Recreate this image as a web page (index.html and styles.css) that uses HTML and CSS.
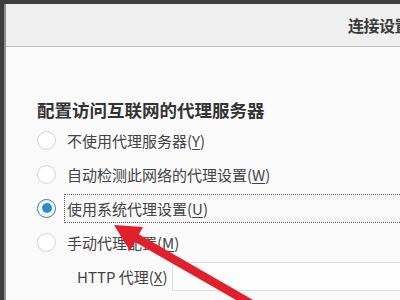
FILE: index.html
```html
<!DOCTYPE html>
<html lang="zh-CN">
<head>
<meta charset="utf-8">
<title>连接设置</title>
<link rel="stylesheet" href="styles.css">
</head>
<body>
<div class="screen">
  <div class="window">
    <header class="titlebar"><span class="title">连接设置</span></header>
    <main class="content">
      <h2 class="heading">配置访问互联网的代理服务器</h2>
      <div class="options">
        <div class="row"><span class="radio"></span><span class="label">不使用代理服务器(<u>Y</u>)</span></div>
        <div class="row"><span class="radio"></span><span class="label">自动检测此网络的代理设置(<u>W</u>)</span></div>
        <div class="row"><span class="radio checked"></span><span class="label focus">使用系统代理设置(<u>U</u>)</span></div>
        <div class="row"><span class="radio"></span><span class="label">手动代理配置(<u>M</u>)</span></div>
        <div class="row field"><span class="field-label">HTTP 代理(<u>X</u>)</span><span class="input"></span></div>
      </div>
    </main>
  </div>
  <svg class="arrow" width="400" height="300" viewBox="0 0 400 300" aria-hidden="true">
    <line x1="128" y1="233" x2="262" y2="310" stroke="#e2202b" stroke-width="8.5"/>
    <polygon points="114,225 143,227 130,251" fill="#e2202b"/>
  </svg>
</div>
</body>
</html>
```
FILE: styles.css
```css
html, body {
  margin: 0;
  padding: 0;
}
body {
  width: 400px;
  height: 300px;
  overflow: hidden;
  font-family: "Noto Sans CJK SC", "Noto Sans", sans-serif;
}
.screen {
  position: relative;
  width: 400px;
  height: 300px;
  background: #3e3e3e;
  padding: 4px 0 0 4px;
  box-sizing: border-box;
  overflow: hidden;
}
.window {
  height: 296px;
  background: #fbfafb;
  border-left: 2px solid #8e8e8e;
  display: flex;
  flex-direction: column;
}
.titlebar {
  height: 42px;
  flex: none;
  background: #f0eff0;
  border-bottom: 1px solid #bdbdbd;
  display: flex;
  align-items: center;
  padding-left: 342px;
  white-space: nowrap;
  overflow: hidden;
}
.title {
  font-size: 16px;
  font-weight: 700;
  color: #3a3a3a;
  letter-spacing: -0.5px;
  flex: none;
}
.content {
  padding-left: 31px;
  padding-top: 51px;
}
.heading {
  margin: 0;
  font-size: 17.5px;
  line-height: 24px;
  font-weight: 700;
  color: #333;
  white-space: nowrap;
}
.options {
  display: flex;
  flex-direction: column;
}
.row {
  height: 34px;
  display: flex;
  align-items: center;
  white-space: nowrap;
}
.row:first-child {
  margin-top: 1px;
}
.radio {
  width: 19px;
  height: 19px;
  border: 1px solid #d3d3d3;
  border-radius: 50%;
  background: #ffffff;
  flex: none;
  box-sizing: border-box;
  display: flex;
  align-items: center;
  justify-content: center;
}
.radio.checked {
  border: 1.5px solid #1f7fd0;
}
.radio.checked::after {
  content: "";
  width: 10px;
  height: 10px;
  border-radius: 50%;
  background: #2a8ad6;
}
.label {
  margin-left: 8px;
  font-size: 15px;
  line-height: 27px;
  color: #444;
  padding: 0 2px;
  border: 1px solid transparent;
  flex: none;
}
.label.focus {
  border: 1px dotted #555;
  width: 340px;
}
u {
  text-decoration-thickness: 1px;
  text-underline-offset: 2px;
}
.field {
  padding-left: 40px;
}
.field-label {
  width: 95px;
  flex: none;
  font-size: 15px;
  color: #444;
}
.input {
  width: 300px;
  flex: none;
  height: 29px;
  box-sizing: border-box;
  border: 1px solid #dedede;
  background: #fdfdfd;
}
.arrow {
  position: absolute;
  left: 0;
  top: 0;
}
```
